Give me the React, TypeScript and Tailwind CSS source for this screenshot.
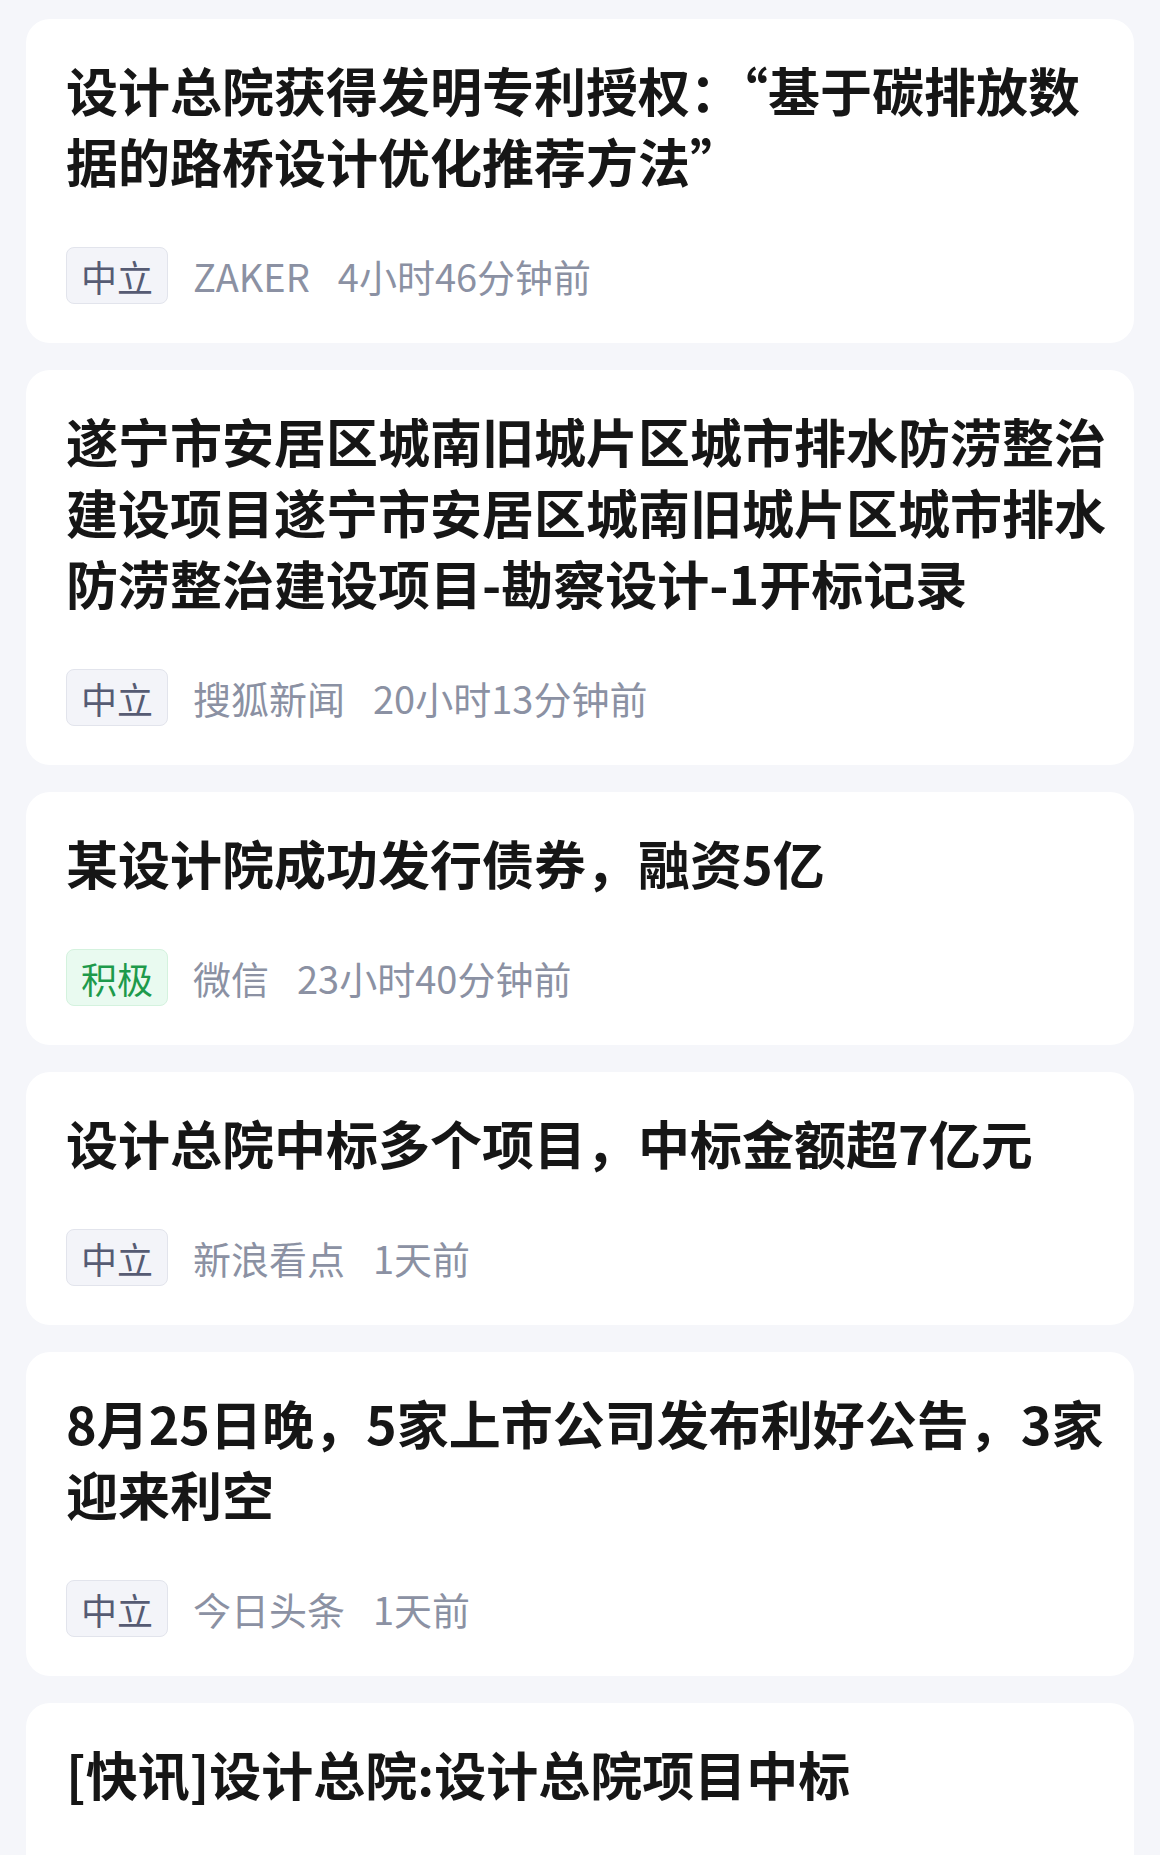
type NewsItem = {
  title: string
  sentiment?: string
  source?: string
  time?: string
}

const newsItems: NewsItem[] = [
  {
    title: "设计总院获得发明专利授权：“基于碳排放数据的路桥设计优化推荐方法”",
    sentiment: "中立",
    source: "ZAKER",
    time: "4小时46分钟前",
  },
  {
    title: "遂宁市安居区城南旧城片区城市排水防涝整治建设项目遂宁市安居区城南旧城片区城市排水防涝整治建设项目-勘察设计-1开标记录",
    sentiment: "中立",
    source: "搜狐新闻",
    time: "20小时13分钟前",
  },
  {
    title: "某设计院成功发行债券，融资5亿",
    sentiment: "积极",
    source: "微信",
    time: "23小时40分钟前",
  },
  {
    title: "设计总院中标多个项目，中标金额超7亿元",
    sentiment: "中立",
    source: "新浪看点",
    time: "1天前",
  },
  {
    title: "8月25日晚，5家上市公司发布利好公告，3家迎来利空",
    sentiment: "中立",
    source: "今日头条",
    time: "1天前",
  },
  {
    // last card runs past the bottom of the screen
    title: "[快讯]设计总院:设计总院项目中标",
  },
]

function SentimentTag({ label }: { label: string }) {
  const positive = label === "积极"
  return (
    <span
      className={
        positive
          ? "flex h-[57px] items-center rounded-[8px] border border-[#d4f2de] bg-[#e9faf0] px-[14px] text-[36px] text-[#1e9a4b]"
          : "flex h-[57px] items-center rounded-[8px] border border-[#e2e4ec] bg-[#f3f4f9] px-[14px] text-[36px] text-[#565b73]"
      }
    >
      {label}
    </span>
  )
}

export default function App() {
  return (
    <div
      className="min-h-screen bg-[#f5f6fa] px-[26px] pt-[19px] pb-8"
      style={{ fontFamily: '"Noto Sans CJK SC", "Noto Sans", sans-serif' }}
    >
      <div className="flex flex-col gap-[27px]">
        {newsItems.map((item, index) => (
          <div key={index} className="rounded-[24px] bg-white pt-[35px] pr-[28px] pb-[39px] pl-10">
            {/* Title */}
            <h3 className="text-[52px] font-bold leading-[71px] text-[#161616]">{item.title}</h3>

            {/* Meta row */}
            {item.sentiment ? (
              <div className="mt-[51px] flex items-center text-[38px] leading-none text-[#8b91a3]">
                <SentimentTag label={item.sentiment} />
                <span className="ml-[25px]">{item.source}</span>
                <span className="ml-[28px]">{item.time}</span>
              </div>
            ) : (
              <div className="mt-[51px] h-[57px]"></div>
            )}
          </div>
        ))}
      </div>
    </div>
  )
}
